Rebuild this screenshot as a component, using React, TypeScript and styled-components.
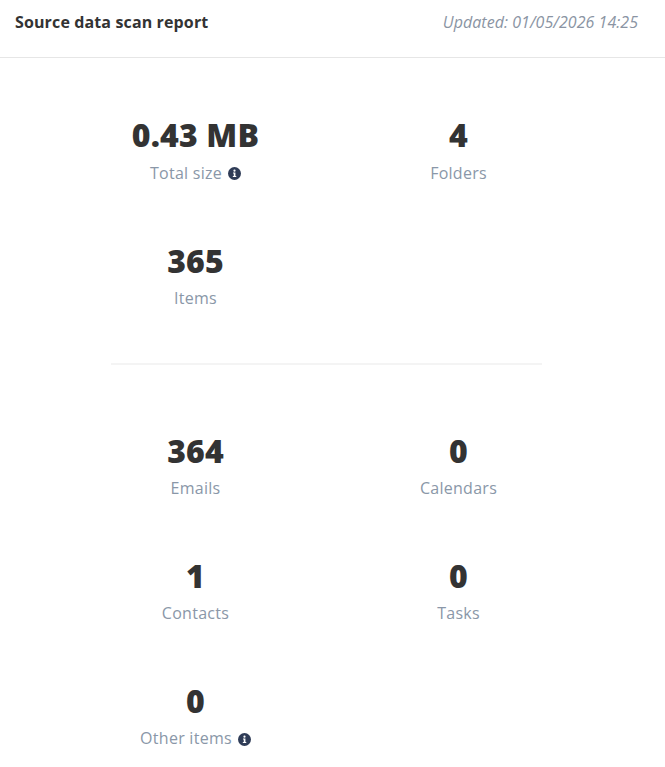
import React from 'react';
import styled, { createGlobalStyle } from 'styled-components';

const GlobalStyle = createGlobalStyle`
  html, body {
    margin: 0;
    padding: 0;
    background: #fff;
    font-family: "Open Sans", sans-serif;
  }
`;

const Page = styled.div`
  width: 665px;
  height: 767px;
  overflow: hidden;
  background: #fff;
`;

const Header = styled.header`
  display: flex;
  align-items: flex-start;
  justify-content: space-between;
  height: 46px;
  padding: 11px 27px 0 15px;
  border-bottom: 1px solid #e6e6e6;
`;

const Title = styled.h1`
  margin: 0;
  font-size: 16px;
  line-height: 22px;
  font-weight: 700;
  letter-spacing: 0.13px;
  color: #333;
`;

const Updated = styled.span`
  font-size: 16px;
  line-height: 22px;
  font-style: italic;
  letter-spacing: 0.04px;
  color: #8a94a3;
`;

const Content = styled.div`
  width: 654px;
`;

const Stat = styled.div`
  display: flex;
  flex-direction: column;
  align-items: center;
`;

const Value = styled.div`
  font-size: 32px;
  line-height: 44px;
  font-weight: 800;
  letter-spacing: 0.15px;
  color: #333;
`;

const Label = styled.div`
  display: flex;
  align-items: center;
  gap: 6px;
  margin-top: 4.4px;
  font-size: 16px;
  line-height: 22px;
  letter-spacing: 0.27px;
  color: #8a97a8;
`;

const StatGrid = styled.section`
  display: grid;
  grid-template-columns: 263px 263px;
  justify-content: center;
  grid-auto-rows: 125.05px;
`;

const TopGrid = styled(StatGrid)`
  padding-top: 55px;
  grid-template-rows: 125.5px 124.5px;

  ${Label} {
    margin-top: 4.5px;
  }
`;

const BottomGrid = styled(StatGrid)`
  padding-top: 64px;
`;

const Divider = styled.hr`
  width: 431px;
  height: 2px;
  margin: 0 0 0 111px;
  border: none;
  background: #f4f4f4;
`;

const InfoIcon = styled.svg`
  width: 13px;
  height: 13px;
  margin-top: 2px;
`;

const InfoDot = () => (
  <InfoIcon viewBox="0 0 14 14" aria-hidden="true">
    <circle cx="7" cy="7" r="7" fill="#2f3c57" />
    <circle cx="7" cy="4" r="1.2" fill="#fff" />
    <path d="M5.4 6h2.6v3.7h.9v1.1H5.2V9.7h1V7.1h-.8z" fill="#fff" />
  </InfoIcon>
);

type StatItem = { value: string; label: string; info?: boolean };

const summary: StatItem[] = [
  { value: '0.43 MB', label: 'Total size', info: true },
  { value: '4', label: 'Folders' },
  { value: '365', label: 'Items' },
];

const breakdown: StatItem[] = [
  { value: '364', label: 'Emails' },
  { value: '0', label: 'Calendars' },
  { value: '1', label: 'Contacts' },
  { value: '0', label: 'Tasks' },
  { value: '0', label: 'Other items', info: true },
];

const renderStat = ({ value, label, info }: StatItem) => (
  <Stat key={label}>
    <Value>{value}</Value>
    <Label>
      {label}
      {info && <InfoDot />}
    </Label>
  </Stat>
);

const App: React.FC = () => (
  <Page>
    <GlobalStyle />
    <Header>
      <Title>Source data scan report</Title>
      <Updated>Updated: 01/05/2026 14:25</Updated>
    </Header>
    <Content>
      <TopGrid>{summary.map(renderStat)}</TopGrid>
      <Divider />
      <BottomGrid>{breakdown.map(renderStat)}</BottomGrid>
    </Content>
  </Page>
);

export default App;
